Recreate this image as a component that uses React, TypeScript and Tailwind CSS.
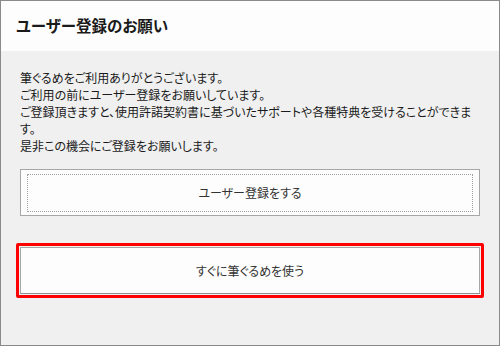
export default function App() {
  const lines = [
    "筆ぐるめをご利用ありがとうございます。",
    "ご利用の前にユーザー登録をお願いしています。",
    "ご登録頂きますと、使用許諾契約書に基づいたサポートや各種特典を受けることができま",
    "す。",
    "是非この機会にご登録をお願いします。",
  ];

  return (
    <div className="w-[500px] h-[346px] flex flex-col border border-[#8a8a8a] bg-[#f0f0f0] font-['Noto_Sans_CJK_JP',sans-serif] [font-feature-settings:'palt'] text-[#1a1a1a]">
      <div className="h-[50px] flex items-center px-[15px] bg-[#fdfdfd]">
        <h1 className="text-[15.5px] font-bold leading-none">ユーザー登録のお願い</h1>
      </div>

      <div className="px-[19px] pt-[18px] text-[12px] leading-[17px] whitespace-nowrap">
        {lines.map((l) => (
          <p key={l}>{l}</p>
        ))}
      </div>

      <div className="px-[19px] mt-[15px]">
        <button className="w-full h-[47px] px-[6px] pt-[4px] pb-[3px] border border-[#a6a6a6] bg-[#fdfdfd]">
          <span className="flex h-full w-full items-center justify-center border border-dotted border-[#a0a0a0] text-[12px] text-[#333]">
            ユーザー登録をする
          </span>
        </button>
      </div>

      <div className="mx-[15px] mt-[27px] p-[1px] border-[3px] border-[#ff0000] rounded-[2px]">
        <button className="flex w-full h-[47px] items-center justify-center border border-[#a6a6a6] border-b-[#8f8f8f] bg-[#fdfdfd] text-[12px] text-[#333]">
          すぐに筆ぐるめを使う
        </button>
      </div>
    </div>
  );
}
